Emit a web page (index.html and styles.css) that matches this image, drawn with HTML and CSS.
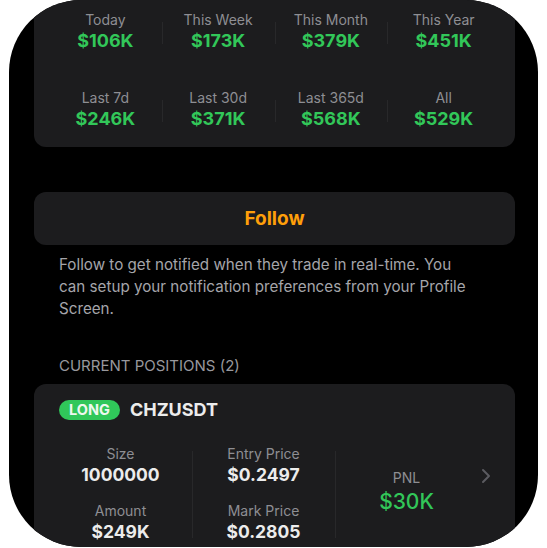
FILE: index.html
```html
<!DOCTYPE html>
<html lang="en">
<head>
    <meta charset="UTF-8">
    <meta name="viewport" content="width=device-width, initial-scale=1.0">
    <title>Trader Profile</title>
    <link rel="stylesheet" href="styles.css">
</head>
<body>
    <div class="phone">
        <!-- PNL theo kỳ -->
        <div class="stats">
            <div class="stat"><span class="stat-label">Today</span><span class="stat-value">$106K</span></div>
            <div class="stat"><span class="stat-label">This Week</span><span class="stat-value">$173K</span></div>
            <div class="stat"><span class="stat-label">This Month</span><span class="stat-value">$379K</span></div>
            <div class="stat"><span class="stat-label">This Year</span><span class="stat-value">$451K</span></div>
            <div class="stat"><span class="stat-label">Last 7d</span><span class="stat-value">$246K</span></div>
            <div class="stat"><span class="stat-label">Last 30d</span><span class="stat-value">$371K</span></div>
            <div class="stat"><span class="stat-label">Last 365d</span><span class="stat-value">$568K</span></div>
            <div class="stat"><span class="stat-label">All</span><span class="stat-value">$529K</span></div>
        </div>

        <button class="follow-btn">Follow</button>
        <p class="follow-note">Follow to get notified when they trade in real-time. You can setup your notification preferences from your Profile Screen.</p>

        <div class="section-title">CURRENT POSITIONS (2)</div>

        <div class="position">
            <div class="position-head">
                <span class="badge">LONG</span>
                <span class="symbol">CHZUSDT</span>
            </div>
            <div class="position-body">
                <div class="pos-col">
                    <span class="pos-label">Size</span>
                    <span class="pos-value">1000000</span>
                    <span class="pos-label">Amount</span>
                    <span class="pos-value">$249K</span>
                </div>
                <div class="pos-col">
                    <span class="pos-label">Entry Price</span>
                    <span class="pos-value">$0.2497</span>
                    <span class="pos-label">Mark Price</span>
                    <span class="pos-value">$0.2805</span>
                </div>
                <div class="pos-col pnl">
                    <span class="pos-label">PNL</span>
                    <span class="pnl-value">$30K</span>
                </div>
                <div class="chevron">
                    <svg width="10" height="16" viewBox="0 0 10 16"><path d="M2 2l6 6-6 6" fill="none" stroke="#5b5b60" stroke-width="2" stroke-linecap="round" stroke-linejoin="round"/></svg>
                </div>
            </div>
        </div>
    </div>
</body>
</html>
```

FILE: styles.css
```css
body {
    margin: 0;
    background-color: #ffffff;
    font-family: 'Inter', 'Liberation Sans', sans-serif;
}
.phone {
    margin-left: 9px;
    width: 529px;
    height: 547px;
    background-color: #000000;
    border-radius: 72px;
    overflow: hidden;
}
.stats {
    margin: -12px 23px 0 25px;
    padding: 23px 15px 16px;
    background-color: #1c1c1e;
    border-radius: 12px;
    display: grid;
    grid-template-columns: repeat(4, 1fr);
    row-gap: 36px;
}
.stat {
    position: relative;
    display: flex;
    flex-direction: column;
    align-items: center;
}
.stat:not(:nth-child(4n+1))::before {
    content: '';
    position: absolute;
    left: 0;
    top: 11px;
    width: 1px;
    height: 22px;
    background-color: #28282a;
}
.stat-label {
    font-size: 14px;
    line-height: 18px;
    color: #8e8e93;
}
.stat-value {
    font-size: 18px;
    line-height: 24px;
    font-weight: 700;
    color: #32c759;
}
.follow-btn {
    display: block;
    box-sizing: border-box;
    width: 481px;
    height: 53px;
    margin: 45px 0 0 25px;
    border: none;
    border-radius: 12px;
    background-color: #1c1c1e;
    color: #ff9f0a;
    font-family: inherit;
    font-size: 19px;
    font-weight: 700;
}
.follow-note {
    margin: 9px 0 0;
    padding: 0 62px 0 50px;
    font-size: 15.2px;
    line-height: 22px;
    color: #a5a5aa;
}
.section-title {
    margin: 35px 0 0 50px;
    font-size: 15px;
    line-height: 22px;
    color: #98989d;
}
.position {
    margin: 7px 0 0 25px;
    width: 481px;
    height: 200px;
    background-color: #1c1c1e;
    border-radius: 12px;
    padding-top: 15px;
}
.position-head {
    display: flex;
    align-items: center;
    gap: 10px;
    padding-left: 25px;
}
.badge {
    height: 20px;
    line-height: 20px;
    padding: 0 10px;
    border-radius: 10px;
    background-color: #30c75a;
    color: #eef8f0;
    font-size: 14.5px;
    font-weight: 700;
}
.symbol {
    font-size: 18px;
    font-weight: 700;
    color: #ececec;
}
.position-body {
    display: grid;
    grid-template-columns: repeat(3, 143px) 1fr;
    margin-top: 25px;
    padding-left: 15px;
}
.pos-col {
    position: relative;
    display: flex;
    flex-direction: column;
    align-items: center;
}
.pos-col + .pos-col::before {
    content: '';
    position: absolute;
    left: 0;
    top: 6px;
    width: 1px;
    height: 87px;
    background-color: #28282a;
}
.pos-label {
    font-size: 14px;
    line-height: 18px;
    color: #8e8e93;
}
.pos-value {
    font-size: 17.5px;
    line-height: 24px;
    font-weight: 700;
    color: #ececec;
    margin-bottom: 15px;
}
.pnl {
    padding-top: 24px;
}
.pnl-value {
    margin-top: 1px;
    font-size: 21px;
    line-height: 28px;
    font-weight: 500;
    color: #32c759;
}
.chevron {
    padding: 23px 0 0 3px;
}
```
